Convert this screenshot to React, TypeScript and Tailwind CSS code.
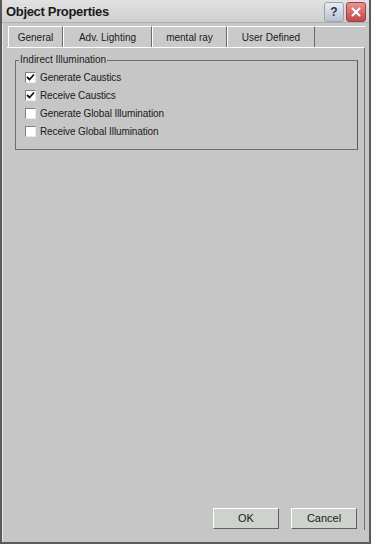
import React from "react";

const tabs = ["General", "Adv. Lighting", "mental ray", "User Defined"];
const tabWidths = ["w-[55px]", "w-[89px]", "w-[75px]", "w-[88px]"];

const options = [
  { label: "Generate Caustics", checked: true },
  { label: "Receive Caustics", checked: true },
  { label: "Generate Global Illumination", checked: false },
  { label: "Receive Global Illumination", checked: false },
];

function CheckBox({ checked }: { checked: boolean }) {
  return (
    <div className="w-[11px] h-[11px] bg-white border-t border-l border-[#808080] border-r border-b border-r-[#e8e8e8] border-b-[#e8e8e8] flex items-center justify-center">
      {checked && (
        <svg width="9" height="9" viewBox="0 0 9 9">
          <path d="M1 4 L3.5 6.5 L8 1.5" stroke="#111" strokeWidth="1.8" fill="none" />
        </svg>
      )}
    </div>
  );
}

export default function App() {
  return (
    <div
      className="w-[371px] h-[544px] bg-[#c6c6c6] flex flex-col border-l-[2px] border-r-[2px] border-b-[2px] border-[#5a5a5a] overflow-hidden"
      style={{ fontFamily: '"Liberation Sans", Arial, sans-serif' }}
    >
      {/* Title bar */}
      <div className="h-[23px] flex items-center justify-between pl-[4px] pr-[3px] pt-[1px] bg-gradient-to-b from-[#e2e2e2] to-[#cfcfcf] border-b border-[#b0b0b0]">
        <span className="text-[13px] font-bold text-[#1a1a1a] tracking-tight">Object Properties</span>
        <div className="flex gap-[2px]">
          <div className="w-[20px] h-[20px] rounded-[3px] border border-[#9aa0b0] bg-gradient-to-b from-[#e8ecf4] to-[#b8c0d0] flex items-center justify-center text-[12px] font-bold text-[#334]">
            ?
          </div>
          <div className="w-[20px] h-[20px] rounded-[3px] border border-[#a04040] bg-gradient-to-b from-[#e89090] to-[#c04848] flex items-center justify-center">
            <svg width="12" height="12" viewBox="0 0 12 12">
              <path d="M2 2 L10 10 M10 2 L2 10" stroke="#fff" strokeWidth="2" />
            </svg>
          </div>
        </div>
      </div>

      {/* Body */}
      <div className="flex-1 flex flex-col pl-[4px] pr-[4px] pt-[2px] pb-[12px] border-l border-[#e8e8d8]">
        {/* Tabs */}
        <div className="flex items-end h-[22px] pl-[1px]">
          {tabs.map((t, i) => (
            <div
              key={t}
              className={`${tabWidths[i]} h-[21px] flex items-center justify-center text-[10px] text-[#1a1a1a] border-t border-l border-white border-r border-r-[#6a6a6a] bg-[#cacaca]`}
            >
              {t}
            </div>
          ))}
          <div className="flex-1 h-[21px] border-t border-white" />
        </div>

        {/* Panel */}
        <div className="flex-1 flex flex-col border-t border-white border-r border-r-[#707070] pt-[6px] pl-[8px] pr-[6px]">
          <fieldset className="border border-[#6e6e6e] border-r-[#5a5a5a] pl-[9px] pr-[6px] pb-[11px] pt-[3px]">
            <legend className="text-[10px] text-[#1a1a1a] px-[1px] -ml-[6px] leading-[12px]">
              Indirect Illumination
            </legend>
            <div className="flex flex-col gap-[5px] mt-[2px]">
              {options.map((o) => (
                <div key={o.label} className="flex items-center gap-[4px] h-[13px]">
                  <CheckBox checked={o.checked} />
                  <span className="text-[10px] text-[#1a1a1a] tracking-[-0.1px]">{o.label}</span>
                </div>
              ))}
            </div>
          </fieldset>

          <div className="flex-1" />

          <div className="flex justify-end gap-[12px] pr-[1px] pb-[1px]">
            {["OK", "Cancel"].map((b) => (
              <div
                key={b}
                className="w-[66px] h-[21px] flex items-center justify-center text-[11px] text-[#1a1a1a] bg-[#cdd2cd] border border-t-white border-l-white border-r-[#606060] border-b-[#606060]"
              >
                {b}
              </div>
            ))}
          </div>
        </div>
      </div>
    </div>
  );
}
